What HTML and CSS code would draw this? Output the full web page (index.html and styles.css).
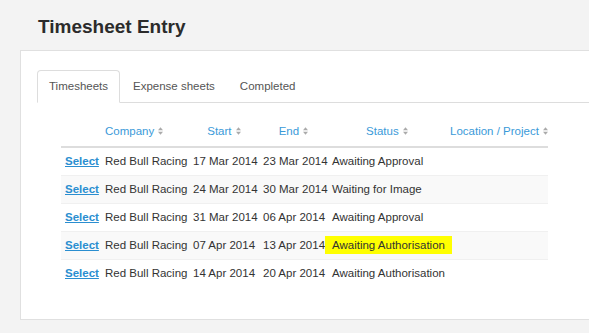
FILE: index.html
```html
<!DOCTYPE html>
<html lang="en">
<head>
    <meta charset="UTF-8">
    <meta name="viewport" content="width=device-width, initial-scale=1.0">
    <title>Timesheet Entry</title>
    <link rel="stylesheet" href="styles.css">
</head>
<body>
    <div class="page-header">
        <h1>Timesheet Entry</h1>
    </div>
    <div class="panel">
        <ul class="tabs">
            <li class="active">Timesheets</li>
            <li>Expense sheets</li>
            <li>Completed</li>
        </ul>
        <div class="tab-content">
            <table class="grid">
                <colgroup>
                    <col style="width: 40px">
                    <col style="width: 88px">
                    <col style="width: 70px">
                    <col style="width: 69px">
                    <col style="width: 118px">
                    <col style="width: 102px">
                </colgroup>
                <thead>
                    <tr>
                        <th></th>
                        <th class="left">Company <svg class="sort" viewBox="0 0 6 9"><path d="M3 0 L6 3.5 H0 Z M3 9 L6 5.5 H0 Z"/></svg></th>
                        <th>Start <svg class="sort" viewBox="0 0 6 9"><path d="M3 0 L6 3.5 H0 Z M3 9 L6 5.5 H0 Z"/></svg></th>
                        <th>End <svg class="sort" viewBox="0 0 6 9"><path d="M3 0 L6 3.5 H0 Z M3 9 L6 5.5 H0 Z"/></svg></th>
                        <th>Status <svg class="sort" viewBox="0 0 6 9"><path d="M3 0 L6 3.5 H0 Z M3 9 L6 5.5 H0 Z"/></svg></th>
                        <th class="left">Location / Project <svg class="sort" viewBox="0 0 6 9"><path d="M3 0 L6 3.5 H0 Z M3 9 L6 5.5 H0 Z"/></svg></th>
                    </tr>
                </thead>
                <tbody>
                    <tr>
                        <td><a href="#">Select</a></td>
                        <td>Red Bull Racing</td>
                        <td>17 Mar 2014</td>
                        <td>23 Mar 2014</td>
                        <td>Awaiting Approval</td>
                        <td></td>
                    </tr>
                    <tr>
                        <td><a href="#">Select</a></td>
                        <td>Red Bull Racing</td>
                        <td>24 Mar 2014</td>
                        <td>30 Mar 2014</td>
                        <td>Waiting for Image</td>
                        <td></td>
                    </tr>
                    <tr>
                        <td><a href="#">Select</a></td>
                        <td>Red Bull Racing</td>
                        <td>31 Mar 2014</td>
                        <td>06 Apr 2014</td>
                        <td>Awaiting Approval</td>
                        <td></td>
                    </tr>
                    <tr>
                        <td><a href="#">Select</a></td>
                        <td>Red Bull Racing</td>
                        <td>07 Apr 2014</td>
                        <td>13 Apr 2014</td>
                        <td><span class="highlight">Awaiting Authorisation</span></td>
                        <td></td>
                    </tr>
                    <tr>
                        <td><a href="#">Select</a></td>
                        <td>Red Bull Racing</td>
                        <td>14 Apr 2014</td>
                        <td>20 Apr 2014</td>
                        <td>Awaiting Authorisation</td>
                        <td></td>
                    </tr>
                </tbody>
            </table>
        </div>
    </div>
</body>
</html>
```

FILE: styles.css
```css
body {
    font-family: "Liberation Sans", Arial, sans-serif;
    font-size: 11.5px;
    color: #333;
    background-color: #f3f3f3;
    margin: 0;
    padding: 0;
    overflow: hidden;
}

.page-header {
    padding: 16px 0 0 38px;
}

.page-header h1 {
    margin: 0;
    font-size: 19px;
    line-height: 22px;
    font-weight: bold;
    color: #2b2b2b;
}

.panel {
    margin: 12px 0 0 20px;
    height: 270px;
    background-color: #fff;
    border: 1px solid #e0e0e0;
    border-right: none;
    padding: 19px 0 0 16px;
    box-sizing: border-box;
}

.tabs {
    list-style: none;
    margin: 0;
    padding: 0;
    display: flex;
    border-bottom: 1px solid #ddd;
}

.tabs li {
    padding: 8px 11px 9px;
    line-height: 14px;
    margin-right: 1px;
    margin-bottom: -1px;
    border: 1px solid transparent;
    border-radius: 4px 4px 0 0;
    color: #555;
}

.tabs li.active {
    border-color: #ddd;
    border-bottom-color: #fff;
    background-color: #fff;
}

.tab-content {
    padding: 15px 0 0 24px;
}

.grid {
    table-layout: fixed;
    width: 487px;
    border-collapse: collapse;
}

.grid th {
    color: #3a9ad9;
    font-weight: normal;
    text-align: center;
    padding: 7px 4px 8px;
    line-height: 13px;
    border-bottom: 2px solid #ddd;
    white-space: nowrap;
}

.grid th.left {
    text-align: left;
}

.sort {
    width: 5px;
    height: 8px;
    fill: #aaa;
    margin-left: 1px;
}

.grid td {
    padding: 7px 4px;
    line-height: 13px;
    border-top: 1px solid #f0f0f0;
    white-space: nowrap;
}

.grid tbody tr:nth-child(even) td {
    background-color: #f9f9f9;
}

.grid a {
    color: #2a8ed0;
    font-weight: bold;
    text-decoration: underline;
}

.highlight {
    background-color: #ffff00;
    padding: 3px 7px;
    margin-left: -7px;
}
```
